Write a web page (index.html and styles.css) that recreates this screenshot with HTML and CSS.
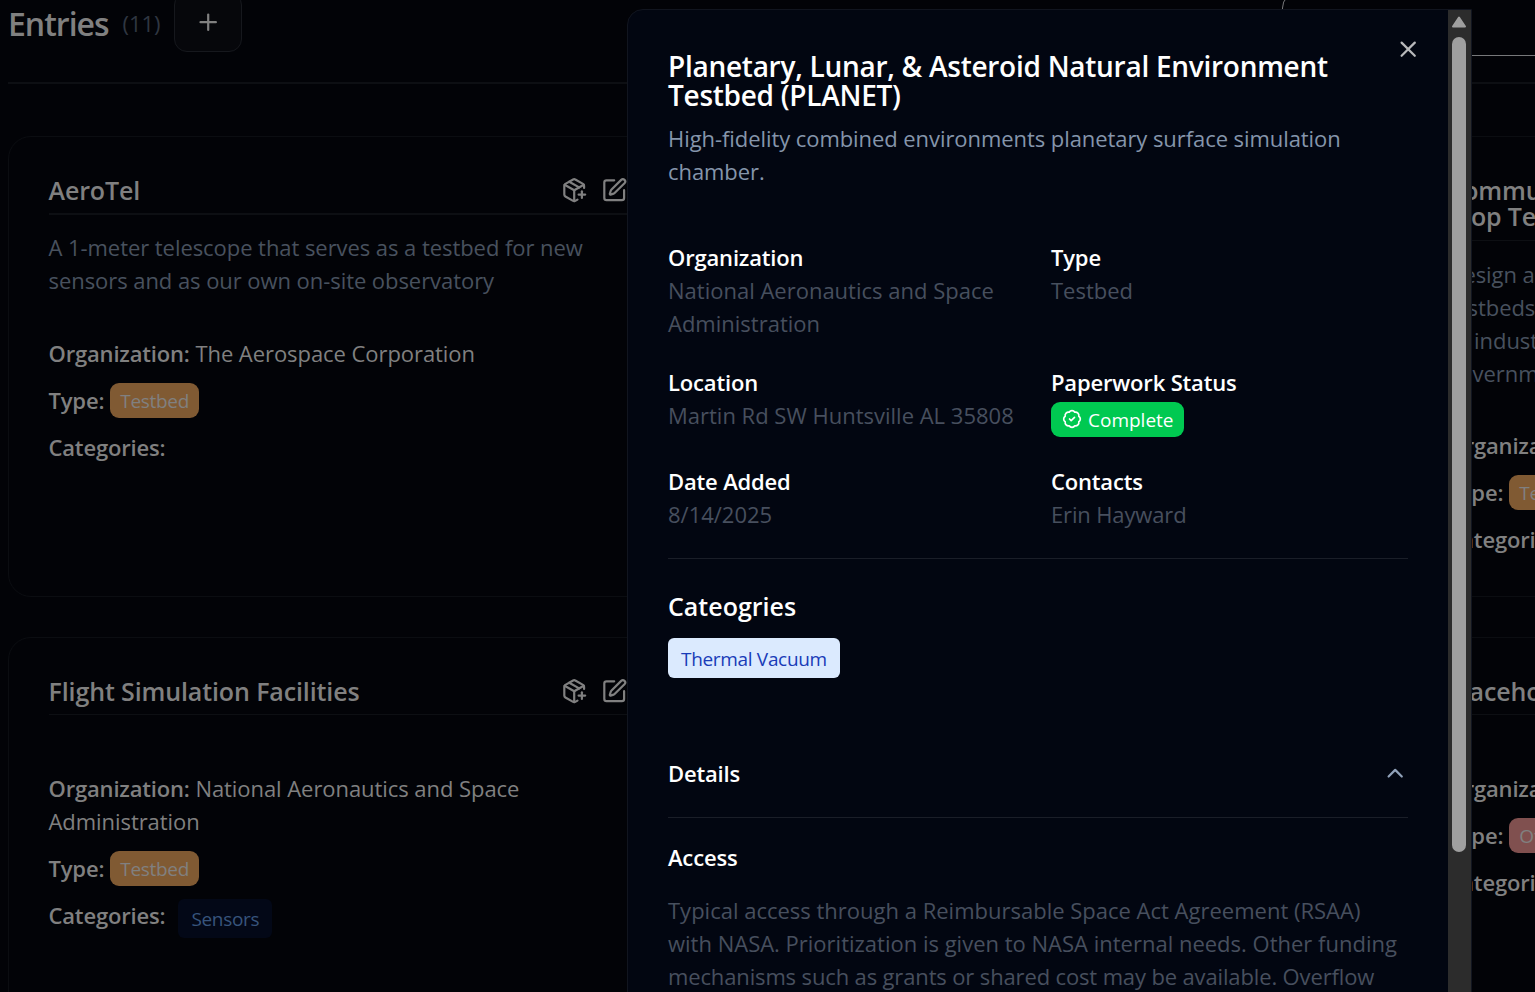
FILE: index.html
```
<!DOCTYPE html>
<html lang="en">
<head>
    <meta charset="UTF-8">
    <meta name="viewport" content="width=device-width, initial-scale=1.0">
    <title>Entries</title>
    <link rel="stylesheet" href="styles.css">
</head>
<body>

<!-- Icons -->
<svg class="icon-defs">
    <symbol id="package-plus" viewBox="0 0 24 24">
        <path d="M16 16h6"/><path d="M19 13v6"/>
        <path d="M21 10V8a2 2 0 0 0-1-1.73l-7-4a2 2 0 0 0-2 0l-7 4A2 2 0 0 0 3 8v8a2 2 0 0 0 1 1.73l7 4a2 2 0 0 0 2 0l2-1.14"/>
        <path d="m7.5 4.27 9 5.15"/><path d="M3.29 7 12 12l8.71-5"/><path d="M12 22V12"/>
    </symbol>
    <symbol id="square-pen" viewBox="0 0 24 24">
        <path d="M12 3H5a2 2 0 0 0-2 2v14a2 2 0 0 0 2 2h14a2 2 0 0 0 2-2v-7"/>
        <path d="M18.375 2.625a1 1 0 0 1 3 3l-9.013 9.014a2 2 0 0 1-.853.505l-2.873.84a.5.5 0 0 1-.62-.62l.84-2.873a2 2 0 0 1 .506-.852z"/>
    </symbol>
</svg>

<!-- Page -->
<div class="page">
    <header class="header">
        <h1>Entries</h1>
        <span class="count">(11)</span>
        <button class="add-btn">
            <svg class="icon" viewBox="0 0 24 24"><path d="M5 12h14"/><path d="M12 5v14"/></svg>
        </button>
        <div class="search"></div>
    </header>

    <main class="cards">
        <article class="card">
            <div class="card-head thick">
                <h2>AeroTel</h2>
                <svg class="icon"><use href="#package-plus"/></svg>
                <svg class="icon"><use href="#square-pen"/></svg>
            </div>
            <p class="desc">A 1-meter telescope that serves as a testbed for new<br>sensors and as our own on-site observatory</p>
            <p class="org"><b>Organization:</b> The Aerospace Corporation</p>
            <div class="row"><b>Type:</b><span class="badge orange">Testbed</span></div>
            <div class="row top"><b>Categories:</b></div>
        </article>

        <article class="card"></article>

        <article class="card">
            <div class="card-head">
                <h2>Community<br>Stop Testbed</h2>
            </div>
            <p class="desc">Design and<br>testbeds for<br>to industry<br>government</p>
            <p class="org"><b>Organization:</b></p>
            <div class="row"><b>Type:</b><span class="badge orange">Testbed</span></div>
            <div class="row top"><b>Categories:</b></div>
        </article>

        <article class="card">
            <div class="card-head">
                <h2>Flight Simulation Facilities</h2>
                <svg class="icon"><use href="#package-plus"/></svg>
                <svg class="icon"><use href="#square-pen"/></svg>
            </div>
            <p class="desc"></p>
            <p class="org"><b>Organization:</b> National Aeronautics and Space<br>Administration</p>
            <div class="row"><b>Type:</b><span class="badge orange">Testbed</span></div>
            <div class="row top"><b>Categories:</b><span class="chip dim">Sensors</span></div>
        </article>

        <article class="card"></article>

        <article class="card">
            <div class="card-head">
                <h2>Placeholder</h2>
            </div>
            <p class="desc"></p>
            <p class="org"><b>Organization:</b></p>
            <div class="row"><b>Type:</b><span class="badge red">Other</span></div>
            <div class="row top"><b>Categories:</b></div>
        </article>
    </main>
</div>

<!-- Dialog -->
<div class="dialog">
    <div class="dialog-body">
        <button class="close-btn">
            <svg class="icon" viewBox="0 0 24 24"><path d="M18 6 6 18"/><path d="m6 6 12 12"/></svg>
        </button>

        <h2 class="dialog-title">Planetary, Lunar, &amp; Asteroid Natural Environment<br>Testbed (PLANET)</h2>
        <p class="dialog-desc">High-fidelity combined environments planetary surface simulation<br>chamber.</p>

        <div class="fields">
            <div><h4>Organization</h4><p>National Aeronautics and Space<br>Administration</p></div>
            <div><h4>Type</h4><p>Testbed</p></div>
            <div><h4>Location</h4><p>Martin Rd SW Huntsville AL 35808</p></div>
            <div>
                <h4>Paperwork Status</h4>
                <span class="badge green">
                    <svg class="icon" viewBox="0 0 24 24"><path d="M3.85 8.62a4 4 0 0 1 4.78-4.77 4 4 0 0 1 6.74 0 4 4 0 0 1 4.78 4.78 4 4 0 0 1 0 6.74 4 4 0 0 1-4.77 4.78 4 4 0 0 1-6.75 0 4 4 0 0 1-4.78-4.77 4 4 0 0 1 0-6.76Z"/><path d="m9 12 2 2 4-4"/></svg>
                    Complete
                </span>
            </div>
            <div><h4>Date Added</h4><p>8/14/2025</p></div>
            <div><h4>Contacts</h4><p class="tight">Erin Hayward</p></div>
        </div>

        <section class="categories">
            <h3>Cateogries</h3>
            <span class="chip">Thermal Vacuum</span>
        </section>

        <div class="accordion">
            <h4>Details</h4>
            <svg class="icon" viewBox="0 0 24 24"><path d="m18 15-6-6-6 6"/></svg>
        </div>

        <section class="access">
            <h4>Access</h4>
            <p>Typical access through a Reimbursable Space Act Agreement (RSAA)<br>with NASA. Prioritization is given to NASA internal needs. Other funding<br><span class="tight">mechanisms such as grants or shared cost may be available. Overflow</span></p>
        </section>
    </div>
    <div class="scrollbar">
        <svg class="arrow" viewBox="0 0 16 12"><path d="M8 1.5 14 10.5H2Z"/></svg>
        <div class="thumb"></div>
    </div>
</div>

</body>
</html>
```
FILE: styles.css
```
* {
    box-sizing: border-box;
}
body {
    margin: 0;
    height: 992px;
    overflow: hidden;
    background-color: #020307;
    color: #808080;
    font-family: "Open Sans", "Noto Sans", sans-serif;
    font-size: 22px;
    line-height: 33px;
}
h1, h2, h3, h4, p {
    margin: 0;
}
h1, h2, h3, h4, b {
    font-weight: 600;
}
b, h4 {
    letter-spacing: -0.17px;
}
button {
    padding: 0;
    background: none;
    color: inherit;
}
.icon-defs {
    display: none;
}
.icon {
    width: 26.4px;
    height: 26.4px;
    flex: none;
    fill: none;
    stroke: currentColor;
    stroke-width: 2;
    stroke-linecap: round;
    stroke-linejoin: round;
}

/* Page */
.page {
    width: 2066px;
    padding: 0 0 0 8px;
    margin-top: -8px;
    letter-spacing: -0.06px;
}
.header {
    display: flex;
    align-items: center;
    height: 92px;
    padding-bottom: 26px;
    border-bottom: 2px solid #0d0f13;
}
.header h1 {
    width: 114.5px;
    margin-bottom: 2px;
    font-size: 32px;
    letter-spacing: -1px;
}
.count {
    width: 51.5px;
    margin-bottom: 2px;
    color: #2f3641;
}
.add-btn {
    display: flex;
    align-items: center;
    justify-content: center;
    width: 68px;
    height: 60px;
    margin-bottom: 4px;
    border: 1px solid #16181d;
    border-radius: 13px;
    background-color: #06070b;
}
.search {
    width: 700px;
    height: 64px;
    margin-left: 1040px;
    border: 1px solid #77787a;
    border-radius: 16px;
}
.cards {
    display: grid;
    grid-template-columns: repeat(3, 660px);
    grid-template-rows: 461px 461px;
    gap: 40px 39.5px;
    margin-top: 52px;
}
.card {
    padding: 39.8px 40px 0 39.5px;
    border: 1px solid #0b0d11;
    border-radius: 23px;
}
.card-head {
    display: flex;
    gap: 13px;
    padding-bottom: 10.2px;
    border-bottom: 1px solid #0d0f13;
}
.card-head.thick {
    border-bottom-width: 2px;
    margin-bottom: -1px;
}
.card-head h2 {
    flex: 1;
    font-size: 25px;
    line-height: 26.4px;
    letter-spacing: -0.12px;
}
.desc {
    padding: 17px 0 39.5px;
    color: #48515e;
}
.row {
    display: flex;
    align-items: center;
    gap: 6px;
    margin-top: 12.9px;
}
.row.top {
    align-items: flex-start;
    gap: 13px;
}
.badge {
    display: inline-flex;
    align-items: center;
    height: 35px;
    padding: 2px 10px 0;
    border-radius: 9px;
    font-size: 19px;
}
.badge.orange {
    background-color: #805a33;
    letter-spacing: -0.3px;
}
.badge.red {
    background-color: #80504f;
}
.badge.green {
    gap: 6px;
    background-color: #00c951;
    color: #fff;
}
.badge .icon {
    width: 20px;
    height: 20px;
    margin: -2px 0 0 1px;
}
.chip {
    display: inline-flex;
    align-items: center;
    height: 40px;
    padding: 3px 13px 0;
    border-radius: 6px;
    background-color: #dbeafe;
    color: #193cb8;
    font-size: 19px;
    letter-spacing: -0.32px;
}
.chip.dim {
    height: 39px;
    padding-top: 2px;
    background-color: #030817;
    color: #37547c;
}

/* Dialog */
.dialog {
    position: absolute;
    top: 9px;
    left: 627px;
    display: flex;
    width: 845px;
    height: 1000px;
    overflow: hidden;
    border: 1px solid #11151f;
    border-radius: 16px 0 0 0;
    background-color: #020611;
}
.dialog-body {
    position: relative;
    flex: 1;
    padding: 42px 40px 0;
    color: #474f5e;
}
.dialog-body h2, .dialog-body h3, .dialog-body h4 {
    color: #fff;
}
.close-btn {
    position: absolute;
    top: 26px;
    right: 27px;
    display: flex;
    border: none;
    color: #b8b9bb;
}
.dialog-title {
    font-size: 28px;
    line-height: 29.4px;
    letter-spacing: -0.27px;
}
.dialog-desc {
    margin-top: 11px;
    color: #8595ab;
    letter-spacing: -0.07px;
}
.fields {
    display: grid;
    grid-template-columns: 1fr 1fr;
    gap: 26px;
    margin-top: 53.6px;
    padding-bottom: 26.4px;
    border-bottom: 1px solid #1a1e28;
    white-space: nowrap;
}
.fields .badge {
    display: flex;
    width: 133px;
    margin: 2.5px 0;
}
.categories {
    margin-top: 31px;
}
.categories h3 {
    margin-bottom: 15px;
    font-size: 25px;
}
.accordion {
    display: flex;
    justify-content: space-between;
    margin-top: 79px;
    padding-bottom: 27px;
    border-bottom: 1px solid #1a1e28;
}
.accordion .icon {
    margin-top: 3px;
    color: #90a1b9;
}
.access {
    margin-top: 23px;
    white-space: nowrap;
}
.access p {
    margin-top: 20px;
}
.tight {
    letter-spacing: -0.14px;
}
.scrollbar {
    display: flex;
    flex-direction: column;
    align-items: flex-start;
    width: 23px;
    padding-left: 4px;
    background-color: #2c2c2c;
}
.arrow {
    width: 16px;
    height: 12px;
    margin: 6px 0 0 -1px;
    fill: #9f9f9f;
    stroke: #9f9f9f;
    stroke-width: 2;
    stroke-linejoin: round;
}
.thumb {
    width: 14px;
    height: 815px;
    margin-top: 9px;
    border-radius: 7px;
    background-color: #9f9f9f;
}
```
